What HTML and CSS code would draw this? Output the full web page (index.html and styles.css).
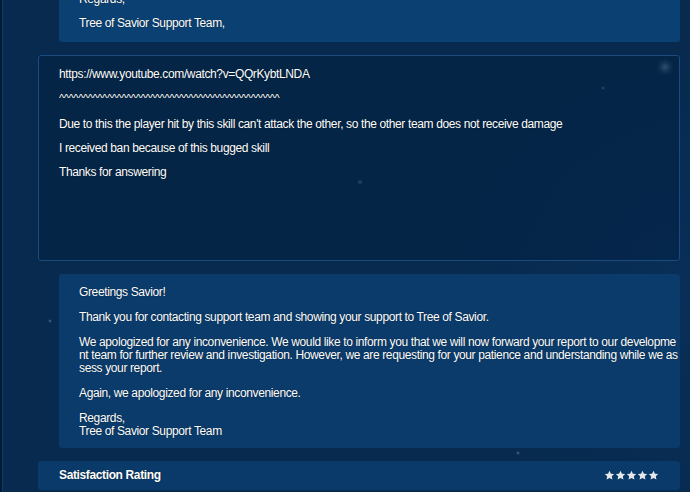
FILE: index.html
```html
<!DOCTYPE html>
<html lang="en">
<head>
    <meta charset="UTF-8">
    <meta name="viewport" content="width=device-width, initial-scale=1.0">
    <title>Ticket - Tree of Savior Support</title>
    <link rel="stylesheet" href="styles.css">
</head>
<body>
    <div class="thread">
        <!-- previous staff reply (scrolled out) -->
        <div class="reply reply-top">
            <p>Regards,</p>
            <p>Tree of Savior Support Team,</p>
        </div>

        <!-- player message -->
        <div class="message">
            <p>https://www.youtube.com/watch?v=QQrKybtLNDA</p>
            <p class="carets">^^^^^^^^^^^^^^^^^^^^^^^^^^^^^^^^^^^^^^^^^^^^^^</p>
            <p>Due to this the player hit by this skill can't attack the other, so the other team does not receive damage</p>
            <p>I received ban because of this bugged skill</p>
            <p>Thanks for answering</p>
        </div>

        <!-- staff reply -->
        <div class="reply">
            <p>Greetings Savior!</p>
            <p>Thank you for contacting support team and showing your support to Tree of Savior.</p>
            <p>We apologized for any inconvenience. We would like to inform you that we will now forward your report to our development team for further review and investigation. However, we are requesting for your patience and understanding while we assess your report.</p>
            <p>Again, we apologized for any inconvenience.</p>
            <p>Regards,<br>Tree of Savior Support Team</p>
        </div>

        <div class="rating">
            <span class="rating-label">Satisfaction Rating</span>
            <span class="stars">
                <svg viewBox="0 0 24 24"><path d="M12 1.5l3.1 6.5 7.1.9-5.2 4.9 1.4 7.1L12 17.4l-6.4 3.5 1.4-7.1-5.2-4.9 7.1-.9z"/></svg>
                <svg viewBox="0 0 24 24"><path d="M12 1.5l3.1 6.5 7.1.9-5.2 4.9 1.4 7.1L12 17.4l-6.4 3.5 1.4-7.1-5.2-4.9 7.1-.9z"/></svg>
                <svg viewBox="0 0 24 24"><path d="M12 1.5l3.1 6.5 7.1.9-5.2 4.9 1.4 7.1L12 17.4l-6.4 3.5 1.4-7.1-5.2-4.9 7.1-.9z"/></svg>
                <svg viewBox="0 0 24 24"><path d="M12 1.5l3.1 6.5 7.1.9-5.2 4.9 1.4 7.1L12 17.4l-6.4 3.5 1.4-7.1-5.2-4.9 7.1-.9z"/></svg>
                <svg viewBox="0 0 24 24"><path d="M12 1.5l3.1 6.5 7.1.9-5.2 4.9 1.4 7.1L12 17.4l-6.4 3.5 1.4-7.1-5.2-4.9 7.1-.9z"/></svg>
            </span>
        </div>
    </div>
</body>
</html>
```

FILE: styles.css
```css
* {
    box-sizing: border-box;
    margin: 0;
    padding: 0;
}
html, body {
    height: 100%;
    overflow: hidden;
}
body {
    font-family: "Liberation Sans", Arial, sans-serif;
    font-size: 12px;
    letter-spacing: -0.37px;
    color: #fff;
    background-color: #072a4e;
    background-image:
        radial-gradient(circle at 665px 67px, rgba(150,180,210,0.55) 0, rgba(150,180,210,0.15) 5px, transparent 9px),
        radial-gradient(circle at 603px 88px, rgba(140,170,210,0.6) 0, transparent 2px),
        radial-gradient(circle at 360px 182px, rgba(140,170,210,0.5) 0, transparent 3px),
        radial-gradient(circle at 50px 321px, rgba(140,170,210,0.5) 0, transparent 2px),
        radial-gradient(circle at 518px 453px, rgba(140,170,210,0.5) 0, transparent 2px),
        radial-gradient(circle at 700px 300px, rgba(10,50,95,0.6) 0, transparent 250px);
    border-left: 2px solid #021b35;
}
.thread {
    margin-top: -22px;
    padding: 0 10px 0 35px;
    border-left: 1px solid #0e3a66;
    min-height: 600px;
    display: flex;
    flex-direction: column;
    gap: 13px;
}
p {
    text-shadow: 0 0 1px rgba(0,0,0,0.6);
}
.reply {
    margin-left: 21px;
    background-color: #0a3b6b;
    border-radius: 3px;
    padding: 12px 1px 10px 20px;
    word-break: break-all;
}
.reply p {
    line-height: 13px;
    margin-bottom: 12px;
}
.reply p:last-child {
    margin-bottom: 0;
}
.reply-top {
    background-color: #0b4072;
    padding-top: 14px;
    padding-bottom: 12px;
}
.reply-top p {
    line-height: 14px;
    margin-bottom: 10px;
}
.message {
    height: 206px;
    border: 1px solid #1a4b7c;
    border-radius: 3px;
    background-color: rgba(2,30,62,0.45);
    padding: 11px 20px 10px;
}
.message p {
    line-height: 14px;
    margin-bottom: 10px;
}
.message .carets {
    font-size: 11px;
    margin-bottom: 12px;
}
.rating {
    display: flex;
    align-items: center;
    justify-content: space-between;
    height: 29px;
    background-color: #0a3a69;
    border-radius: 3px;
    padding: 0 21px 1px 21px;
}
.rating-label {
    font-weight: bold;
    text-shadow: 0 0 1px rgba(0,0,0,0.6);
}
.stars {
    display: flex;
}
.stars svg {
    width: 11px;
    height: 11px;
    fill: #e6e8ec;
}
```
